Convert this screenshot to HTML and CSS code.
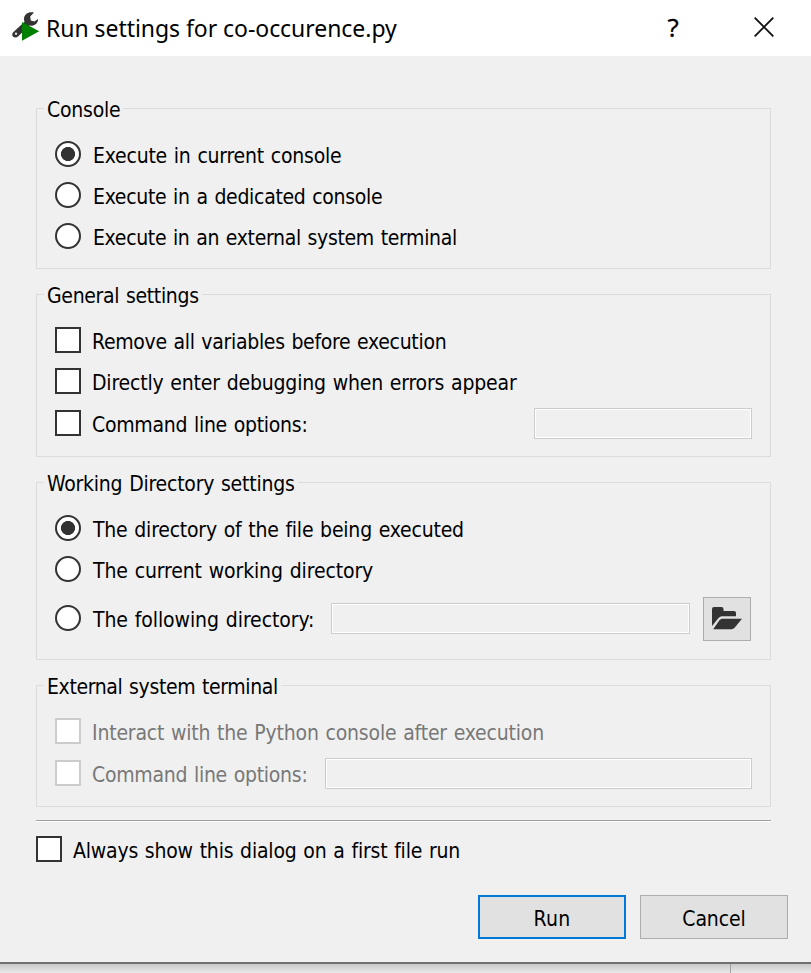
FILE: index.html
```
<!DOCTYPE html>
<html lang="en">
<head>
<meta charset="utf-8">
<title>Run settings for co-occurence.py</title>
<link rel="stylesheet" href="styles.css">
</head>
<body>
<div class="dialog">
  <header class="titlebar">
    <svg class="app-icon" width="28" height="30" viewBox="0 0 28 30">
      <path fill="#333" d="M22 .6C17-.9 12.2 2 12 6.5C12 8 12.2 9 12.6 9.8L1.2 20.2C-.8 22.2 .4 25.6 3.6 25.6C4.6 25.6 5.4 25.2 6 24.6L17.5 13.6C22 14.4 26.3 11.5 26 7L22.4 9.4L18.8 8.5L18.2 4.6Z"/>
      <circle cx="4" cy="21.7" r="1.2" fill="#ddd"/>
      <path fill="#008000" d="M10 10V28.8L27.2 19.3Z"/>
    </svg>
    <h1 class="title">Run settings for co-occurence.py</h1>
    <span class="help">?</span>
    <svg class="close" width="20" height="20" viewBox="0 0 20 20"><path d="M.7.7 19.3 19.3M19.3.7.7 19.3" stroke="#111" stroke-width="1.9"/></svg>
  </header>

  <main class="content">
    <fieldset class="group console">
      <legend class="legend">Console</legend>
      <label class="row"><span class="radio checked"></span><span class="text t-current">Execute in current console</span></label>
      <label class="row"><span class="radio"></span><span class="text t-dedicated">Execute in a dedicated console</span></label>
      <label class="row"><span class="radio"></span><span class="text t-external">Execute in an external system terminal</span></label>
    </fieldset>

    <fieldset class="group general">
      <legend class="legend t-general">General settings</legend>
      <label class="row"><span class="check"></span><span class="text t-remove">Remove all variables before execution</span></label>
      <label class="row"><span class="check"></span><span class="text t-debug">Directly enter debugging when errors appear</span></label>
      <label class="row options"><span class="check"></span><span class="text t-options">Command line options:</span><span class="field field-short"></span></label>
    </fieldset>

    <fieldset class="group directory">
      <legend class="legend">Working Directory settings</legend>
      <label class="row"><span class="radio checked"></span><span class="text t-file">The directory of the file being executed</span></label>
      <label class="row"><span class="radio"></span><span class="text t-cwd">The current working directory</span></label>
      <label class="row following"><span class="radio"></span><span class="text t-following">The following directory:</span><span class="field field-medium"></span>
        <span class="browse"><svg width="30" height="23" viewBox="0 0 30 23" fill="#333"><path d="M0 19V2Q0 0 2 0H9.5Q11.5 0 11.5 2V4H22Q24 4 24 6V9.3H10Q8 9.3 6.5 11Z"/><path d="M10 11.7H30L22.8 20.6Q21.4 22.3 19.5 22.3H1.2L7.5 13.2Q8.6 11.7 10 11.7Z"/></svg></span>
      </label>
    </fieldset>

    <fieldset class="group terminal">
      <legend class="legend t-terminal">External system terminal</legend>
      <label class="row disabled"><span class="check"></span><span class="text t-interact">Interact with the Python console after execution</span></label>
      <label class="row options disabled"><span class="check"></span><span class="text t-options">Command line options:</span><span class="field field-long"></span></label>
    </fieldset>

    <hr class="separator">
    <label class="row always"><span class="check"></span><span class="text t-always">Always show this dialog on a first file run</span></label>
  </main>

  <footer class="actions">
    <button class="button primary">Run</button>
    <button class="button">Cancel</button>
  </footer>
</div>
<div class="backdrop"><span class="divider"></span></div>
</body>
</html>
```
FILE: styles.css
```
* { box-sizing: border-box; }

body {
  margin: 0;
  height: 973px;
  overflow: hidden;
  background: #f0f0f0;
  color: #000;
  font: 21px/23px "DejaVu Sans Condensed", "DejaVu Sans", sans-serif;
  font-stretch: condensed;
  letter-spacing: -0.22px;
  word-spacing: 1px;
}

.dialog {
  height: 964px;
  display: flex;
  flex-direction: column;
  border-bottom: 2px solid #6f6f6f;
}

.titlebar {
  height: 56px;
  flex: none;
  display: flex;
  align-items: center;
  padding: 0 37px 0 12px;
  background: #fff;
}
.app-icon { flex: none; margin-top: -2px; }
.title {
  margin: -1px auto 0 6px;
  font: 400 23px/32px "Noto Sans", sans-serif;
  letter-spacing: -0.05px;
  word-spacing: 0;
}
.help {
  width: 12px;
  margin: -2px 75px 0 0;
  font: 400 26px/32px "Open Sans", sans-serif;
  -webkit-text-stroke: 0.4px #000;
  text-align: center;
}
.close { flex: none; margin-top: -2px; }

.content { padding: 40px 40px 0 36px; }

.group {
  min-width: 0;
  margin: 0 0 13px;
  padding: 20px 18px 0;
  border: 1px solid #dcdcdc;
}
.console { height: 173px; }
.general { height: 175px; }
.directory { height: 190px; }
.terminal { height: 134px; }

.legend {
  height: 25px;
  margin-left: -11px;
  padding: 3px 3px 0 3px;
}

.row {
  display: flex;
  align-items: center;
  height: 26px;
}
.row + .row { margin-top: 15px; }
.row + .options { margin-top: 16px; }
.row + .following { margin-top: 23px; }

.text { padding-top: 4px; white-space: nowrap; }

.radio, .check {
  flex: none;
  width: 26px;
  height: 26px;
  border: 2px solid #333;
  background: #fff;
}
.radio { margin-right: 12px; border-radius: 50%; }
.check { margin-right: 11px; }
.checked { background: radial-gradient(circle, #333 6.7px, #fff 7.4px); }

.disabled { color: #787878; }
.disabled .check { border-color: #ccc; }

.field {
  flex: none;
  height: 31px;
  margin: -2px 0 -3px auto;
  border: 1px solid #ccc;
  box-shadow: inset 0 0 0 1px #fff;
}
.field-short { width: 218px; }
.field-medium { width: 359px; }
.field-long { width: 427px; }

.browse {
  flex: none;
  display: flex;
  align-items: center;
  justify-content: center;
  width: 48px;
  height: 44px;
  margin: -8px 1px -10px 13px;
  padding-bottom: 2px;
  border: 1px solid #adadad;
  background: #e1e1e1;
}

.separator {
  height: 2px;
  margin: 0 0 14px;
  border: 0;
  border-top: 1px solid #a0a0a0;
  background: #fff;
}
.always .check { margin-right: 11px; }

.actions {
  display: flex;
  justify-content: flex-end;
  gap: 14px;
  margin-top: 33px;
  padding-right: 23px;
}
.button {
  width: 148px;
  height: 44px;
  padding: 4px 0 0;
  border: 1px solid #adadad;
  background: #e1e1e1;
  color: #000;
  font: inherit;
  letter-spacing: -0.1px;
}
.primary { border: 2px solid #0078d7; letter-spacing: 0.3px; }

.backdrop {
  height: 9px;
  padding-left: 730px;
  background: linear-gradient(#c8c8c8, #eaeaea);
}
.divider { display: block; width: 1px; height: 9px; background: #a0a0a0; }

/* Per-label tracking */
.t-current { letter-spacing: -0.21px; }
.t-dedicated { letter-spacing: -0.3px; }
.t-external { letter-spacing: -0.32px; }
.t-general { letter-spacing: -0.32px; }
.t-remove { letter-spacing: -0.3px; }
.t-debug { letter-spacing: -0.18px; }
.t-options { letter-spacing: -0.27px; }
.t-file { letter-spacing: -0.21px; }
.t-cwd { letter-spacing: -0.12px; }
.t-following { letter-spacing: -0.09px; }
.t-terminal { letter-spacing: -0.36px; }
.t-interact { letter-spacing: -0.19px; }
.t-always { letter-spacing: -0.2px; }
```
